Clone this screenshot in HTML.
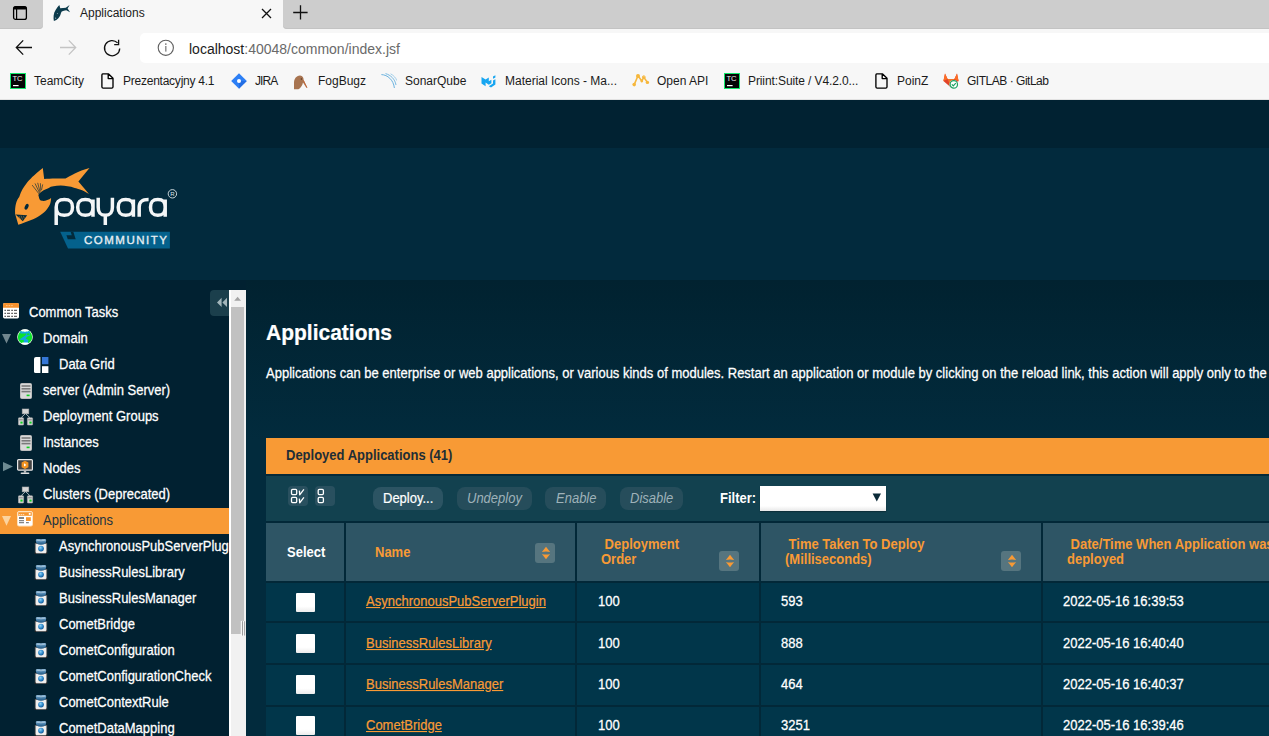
<!DOCTYPE html>
<html><head><meta charset="utf-8">
<style>
*{margin:0;padding:0;box-sizing:border-box}
html,body{width:1269px;height:736px;overflow:hidden;background:#f7f7f7;font-family:"Liberation Sans",sans-serif}
.a{position:absolute}
.t{position:absolute;white-space:nowrap;line-height:1}
/* chrome */
#tabl{left:0;top:0;width:43px;height:29px;background:#cdcdcd;border-bottom-right-radius:4px;box-shadow:inset 0 -1px 0 #c3c3c3}
#tabr{left:283px;top:0;width:986px;height:29px;background:#cdcdcd;border-bottom-left-radius:4px;box-shadow:inset 0 -1px 0 #c3c3c3}
#addr{left:140px;top:33px;width:1140px;height:30px;background:#fff;border-radius:5px}
#bmline{left:0;top:99px;width:1269px;height:1px;background:#e2e2e2}
.bm{position:absolute;top:74px;font-size:12px;color:#1b1b1b;line-height:14px;white-space:nowrap}
/* page */
#top{left:0;top:100px;width:1269px;height:48px;background:#012232}
#logo{left:0;top:148px;width:1269px;height:132px;background:#022a3d}
#side{left:0;top:280px;width:229px;height:456px;background:#012131}
#gap{left:229px;top:280px;width:37px;height:456px;background:#012131}
#content{left:246px;top:280px;width:1023px;height:456px;background:linear-gradient(#012230,#022b3d 160px,#022b3d)}
.si{position:absolute;font-size:13px;color:#fff;line-height:26px;white-space:nowrap;-webkit-text-stroke-width:0.25px;transform:scaleY(1.1);transform-origin:0 9.5px}
.sy{transform:scaleY(1.1);transform-origin:0 3px}
</style></head><body>
<!-- tab strip -->
<div class="a" id="tabl"></div>
<div class="a" id="tabr"></div>
<div class="t" style="left:80px;top:6px;font-size:12px;color:#1b1b1b;line-height:14px">Applications</div>
<div class="a" id="addr"></div>
<div class="t" style="left:189px;top:41px;font-size:14px;color:#1b1b1b;line-height:16px">localhost<span style="color:#6a6a6a">:40048/common/index.jsf</span></div>
<div class="a" id="bmline"></div>
<div class="bm" style="left:34px">TeamCity</div>
<div class="bm" style="left:123px;letter-spacing:-0.24px">Prezentacyjny 4.1</div>
<div class="bm" style="left:255px;letter-spacing:-0.9px">JIRA</div>
<div class="bm" style="left:318px">FogBugz</div>
<div class="bm" style="left:405px">SonarQube</div>
<div class="bm" style="left:505px">Material Icons - Ma...</div>
<div class="bm" style="left:657px">Open API</div>
<div class="bm" style="left:748px;letter-spacing:-0.1px">Priint:Suite / V4.2.0...</div>
<div class="bm" style="left:897px">PoinZ</div>
<div class="bm" style="left:967px;letter-spacing:-0.48px">GITLAB · GitLab</div>


<!-- chrome icons -->
<svg class="a" style="left:12px;top:5px" width="16" height="16" viewBox="0 0 16 16"><rect x="1.6" y="1.6" width="12.8" height="12.8" rx="2" fill="none" stroke="#000" stroke-width="1.3"/><rect x="1.6" y="1.6" width="12.8" height="3" rx="1" fill="#000"/><line x1="4.6" y1="4" x2="4.6" y2="14.4" stroke="#000" stroke-width="1.2"/></svg>
<svg class="a" style="left:53px;top:4px" width="18" height="18" viewBox="0 0 18 18"><path d="M0.9 17 C0.2 14 0.4 9 2.6 6 C3.8 4.2 5 2.4 6.3 1 L7.3 4.3 C9 3.9 11 3.9 12.8 3.7 L16.6 1 L14.6 4.4 L17.1 8.2 L13.2 6.2 C11.5 6.4 10 6.8 8.8 7.5 C8 8.5 7.8 9.8 7.4 11 C6.4 13.6 4.6 15.8 0.9 17Z" fill="#0b3a4b"/><circle cx="2.6" cy="14.2" r=".6" fill="#9ab"/><circle cx="4.4" cy="9.6" r=".5" fill="#9ab"/></svg>
<svg class="a" style="left:261px;top:8px" width="11" height="11" viewBox="0 0 11 11"><path d="M1 1L10 10M10 1L1 10" stroke="#111" stroke-width="1.3"/></svg>
<svg class="a" style="left:292px;top:4px" width="17" height="17" viewBox="0 0 17 17"><path d="M8.5 1.2V15.6M1.2 8.5H15.6" stroke="#111" stroke-width="1.3"/></svg>
<svg class="a" style="left:15px;top:39px" width="18" height="17" viewBox="0 0 18 17"><path d="M17 8.5H1.6M8.2 1.4L1.3 8.5L8.2 15.6" fill="none" stroke="#111" stroke-width="1.3"/></svg>
<svg class="a" style="left:59px;top:39px" width="18" height="17" viewBox="0 0 18 17"><path d="M1 8.5H16.4M9.8 1.4L16.7 8.5L9.8 15.6" fill="none" stroke="#c4c4c4" stroke-width="1.3"/></svg>
<svg class="a" style="left:100px;top:36px" width="24" height="24" viewBox="0 0 24 24"><path d="M19.7 12.4A7.6 7.6 0 1 1 17.6 6.9" fill="none" stroke="#111" stroke-width="1.3"/><path d="M18.6 3.8V8.6H14.2" fill="none" stroke="#111" stroke-width="1.3"/></svg>
<svg class="a" style="left:157px;top:39px" width="18" height="18" viewBox="0 0 18 18"><circle cx="8.8" cy="8.8" r="7.6" fill="none" stroke="#5f5f5f" stroke-width="1.1"/><rect x="8.1" y="4.4" width="1.4" height="1.4" fill="#666"/><rect x="8.1" y="7" width="1.4" height="5.6" fill="#888"/></svg>

<svg class="a" style="left:10px;top:73px" width="16" height="16" viewBox="0 0 16 16"><rect x="0.5" y="0.5" width="15" height="15" fill="#050505" stroke="#12e86a" stroke-width="1"/><text x="2.4" y="8.4" font-family="Liberation Sans" font-size="7.6" fill="#f0f0f0">TC</text><rect x="3" y="12" width="5.6" height="1.2" fill="#fff"/></svg><svg class="a" style="left:101px;top:73px" width="13" height="16" viewBox="0 0 13 16"><path d="M1.8 0.9H7.6L12 5.3V14A1.2 1.2 0 0 1 10.8 15.1H2.1A1.2 1.2 0 0 1 0.9 14V2A1.2 1.2 0 0 1 1.8 0.9Z M7.2 1V5.6H11.9" fill="none" stroke="#000" stroke-width="1.35" stroke-linejoin="round"/></svg><svg class="a" style="left:724px;top:73px" width="16" height="16" viewBox="0 0 16 16"><rect x="0.5" y="0.5" width="15" height="15" fill="#050505" stroke="#12e86a" stroke-width="1"/><text x="2.4" y="8.4" font-family="Liberation Sans" font-size="7.6" fill="#f0f0f0">TC</text><rect x="3" y="12" width="5.6" height="1.2" fill="#fff"/></svg><svg class="a" style="left:875px;top:73px" width="13" height="16" viewBox="0 0 13 16"><path d="M1.8 0.9H7.6L12 5.3V14A1.2 1.2 0 0 1 10.8 15.1H2.1A1.2 1.2 0 0 1 0.9 14V2A1.2 1.2 0 0 1 1.8 0.9Z M7.2 1V5.6H11.9" fill="none" stroke="#000" stroke-width="1.35" stroke-linejoin="round"/></svg><svg class="a" style="left:231px;top:73px" width="16" height="16" viewBox="0 0 16 16"><path d="M8 0.2L15.8 8L8 15.8L0.2 8Z" fill="#2d7ff5"/><path d="M8 8L15.8 8L8 15.8Z" fill="#1c63d8" opacity=".6"/><circle cx="8" cy="8" r="2" fill="#fff"/></svg><svg class="a" style="left:293px;top:74px" width="16" height="16" viewBox="0 0 16 16"><path d="M1 15.2V8.6C1 5 3 1.6 7 1.4C9.6 1.3 10.6 3.6 10.6 5.8L14 13.8L13.5 14L10 8.4C9.4 11.4 7.6 14 5.4 15.2Z" fill="#a87450"/><circle cx="8.4" cy="5" r=".7" fill="#553322"/><path d="M10.4 6.6L14 13.6" stroke="#c5683a" stroke-width="1"/></svg><svg class="a" style="left:381px;top:73px" width="16" height="16" viewBox="0 0 16 16"><path d="M0.4 1.6C6.6 1.8 12.4 6.8 13.4 15" fill="none" stroke="#6ab2df" stroke-width="1"/><path d="M4.5 0.6C9.6 2 14 6 15 12" fill="none" stroke="#6ab2df" stroke-width=".9"/><path d="M9.6 0.8C12.8 2.6 15 5 15.8 7.6" fill="none" stroke="#8cc4e6" stroke-width=".8"/></svg><svg class="a" style="left:481px;top:74px" width="16" height="16" viewBox="0 0 16 16"><path d="M0.5 3L4.6 5.6L7.8 3.6L7.8 7.2L10.4 5.8V9.2L7.8 10.8L4.6 8.6L4.6 12.2L0.5 9.6Z" fill="#17a6f1"/><path d="M12 2.4L14.4 1.2V3.6L12 4.8Z" fill="#17a6f1"/><path d="M14.4 5.2V10.6L10 13.6L7.8 12.2L12 9.5V6.6Z" fill="#17a6f1"/></svg><svg class="a" style="left:632px;top:74px" width="18" height="13" viewBox="0 0 18 13"><path d="M2.2 10.6L6 1.8L9.8 7L11.8 3.2L15.4 8.4" fill="none" stroke="#f6b73c" stroke-width="1.6"/><circle cx="2.2" cy="10.6" r="1.8" fill="#f6b73c"/><circle cx="6" cy="2" r="2" fill="#f6b73c"/><circle cx="9.8" cy="7" r="1.4" fill="#f6b73c"/><circle cx="11.8" cy="3.2" r="1.4" fill="none" stroke="#f6b73c" stroke-width="1"/><circle cx="15.4" cy="8.4" r="1.7" fill="#f6b73c"/></svg><svg class="a" style="left:943px;top:73px" width="16" height="16" viewBox="0 0 16 16"><path d="M2 0.6L4.6 6H11.4L14 0.6L15.6 8L8 14.4L0.4 8Z" fill="#e24329"/><path d="M0.4 8L2 0.6L4.6 6Z M15.6 8L14 0.6L11.4 6Z" fill="#fc6d26"/><path d="M8 14.4L4.6 6H11.4Z" fill="#fca326" opacity=".5"/><circle cx="10.8" cy="11.4" r="4.4" fill="#fff"/><circle cx="10.8" cy="11.4" r="3.7" fill="#fff" stroke="#1aa260" stroke-width="1.2"/><path d="M8.8 11.4L10.3 12.8L12.8 10.2" fill="none" stroke="#1aa260" stroke-width="1.2"/></svg>
<!-- page -->
<div class="a" id="top"></div>
<div class="a" id="logo"></div>
<div class="a" id="side"></div>
<div class="a" id="gap"></div>
<div class="a" id="content"></div>


<!-- logo -->
<svg class="a" style="left:0;top:160px" width="190" height="95" viewBox="0 160 190 95">
<path d="M18.3 224.8 L15.1 213.8 C14.8 206 16.5 200 19.2 197.1 C21 191 24 186.5 26.6 183.3 C29.5 179.5 34 175 42.8 168 L44.2 179.1 C49 178.4 55 178.4 65.5 178.6 C70 176 78 171 89.5 168 L78.4 181.4 L89 193.9 C83 190 78 188.5 74.7 187.9 C70 186.5 65 185.6 60.8 185.6 C55 185.6 51 186.5 48.8 187.9 C44.5 189.5 42 191 40.5 192.5 C38.5 194 38 195 38.7 196.2 C39 199 40 200.5 42 200.8 C45 201.2 48.5 200 51.1 198 C51 202 50 205 48.8 206.4 C46.5 210 44.5 212 42.3 213.8 C39 216.5 36 218 33.1 219.3 C28 221.5 22 223.5 18.3 224.8Z" fill="#f89a35"/>
<path d="M15.6 214.4 L27.2 215.2 L22.8 221.2Z" fill="#02293b"/>
<path d="M19 216L21 220.5M21 215.6L22.6 219.6M23.4 215.8L24.3 218.4" stroke="#f89a35" stroke-width=".7" opacity=".6"/>
<ellipse cx="26.6" cy="206.8" rx="1.7" ry="3.1" transform="rotate(25 26.6 206.8)" fill="#02293b"/>
<path d="M38.8 193.6L32.4 185.4M39.4 192.6L35.2 183.8M40 191.8L37.8 183.2M40.8 190.8L40.4 183.6M41.6 189.6L42.6 184.8" stroke="#2a3a3a" stroke-width=".75" stroke-linecap="round"/>
<path d="M56.20 207.30 C56.20 201.61 58.48 199.40 64.35 199.40 C70.22 199.40 72.50 201.61 72.50 207.30 C72.50 212.99 70.22 215.20 64.35 215.20 C58.48 215.20 56.20 212.99 56.20 207.30Z M56.20 207.30V225 M77.70 207.30 C77.70 201.61 79.84 199.40 85.35 199.40 C90.86 199.40 93.00 201.61 93.00 207.30 C93.00 212.99 90.86 215.20 85.35 215.20 C79.84 215.20 77.70 212.99 77.70 207.30Z M93.00 199.40V216.8 M98.20 197.8V207.30C98.20 212.99 100.19 215.20 105.30 215.20C110.41 215.20 112.40 212.99 112.40 207.30V197.8 M105.30 215.20V225 M118.20 207.30 C118.20 201.61 120.33 199.40 125.80 199.40 C131.27 199.40 133.40 201.61 133.40 207.30 C133.40 212.99 131.27 215.20 125.80 215.20 C120.33 215.20 118.20 212.99 118.20 207.30Z M133.40 199.40V216.8 M139.20 216.8V207.30C139.20 201.40 142.20 199.40 148.6 199.40 M150.50 207.30 C150.50 201.61 152.56 199.40 157.85 199.40 C163.14 199.40 165.20 201.61 165.20 207.30 C165.20 212.99 163.14 215.20 157.85 215.20 C152.56 215.20 150.50 212.99 150.50 207.30Z M165.20 199.40V216.8" fill="none" stroke="#f4f6f7" stroke-width="3.5"/>
<circle cx="172.4" cy="193.8" r="4.2" fill="none" stroke="#dfe6ea" stroke-width=".9"/>
<text x="170.2" y="196.3" font-family="Liberation Sans" font-size="6" fill="#dfe6ea">R</text>
<path d="M60.2 231.8 H169.9 V248.4 H68 Z" fill="#04618c"/>
<path d="M70.6 231.8 H73.3 L75.7 239.2 H67.8 L66.4 235.3 H71.8 Z" fill="#022a3c"/>
</svg>
<div class="t" style="left:84px;top:235px;font-size:11.5px;color:#e6eef2;letter-spacing:1.5px;line-height:10px;-webkit-text-stroke-width:0.35px">COMMUNITY</div>

<!-- sidebar -->
<div class="a" style="left:0;top:508px;width:229px;height:26px;background:#f89a35"></div>
<div class="si" style="left:29px;top:299px">Common Tasks</div>
<div class="si" style="left:43px;top:325px">Domain</div>
<div class="si" style="left:59px;top:351px">Data Grid</div>
<div class="si" style="left:43px;top:377px">server (Admin Server)</div>
<div class="si" style="left:43px;top:403px">Deployment Groups</div>
<div class="si" style="left:43px;top:429px">Instances</div>
<div class="si" style="left:43px;top:455px">Nodes</div>
<div class="si" style="left:43px;top:481px">Clusters (Deprecated)</div>
<div class="si" style="left:43px;top:507px;color:#1d3440;-webkit-text-stroke-width:0">Applications</div>
<div style="position:absolute;left:0;top:0;width:229px;height:736px;overflow:hidden">
<div class="si" style="left:59px;top:533px">AsynchronousPubServerPlugin</div>
</div>
<div class="si" style="left:59px;top:559px">BusinessRulesLibrary</div>
<div class="si" style="left:59px;top:585px">BusinessRulesManager</div>
<div class="si" style="left:59px;top:611px">CometBridge</div>
<div class="si" style="left:59px;top:637px">CometConfiguration</div>
<div class="si" style="left:59px;top:663px">CometConfigurationCheck</div>
<div class="si" style="left:59px;top:689px">CometContextRule</div>
<div class="si" style="left:59px;top:715px">CometDataMapping</div>


<!-- sidebar icons -->
<svg width="0" height="0" style="position:absolute"><defs><linearGradient id="lidg" x1="0" y1="0" x2="0" y2="1"><stop offset="0" stop-color="#8fb6d4"/><stop offset=".45" stop-color="#4f86b0"/><stop offset="1" stop-color="#1b527e"/></linearGradient><radialGradient id="ballg" cx=".4" cy=".35" r=".7"><stop offset="0" stop-color="#8fd2f8"/><stop offset=".6" stop-color="#2b86c8"/><stop offset="1" stop-color="#0f4f8c"/></radialGradient></defs></svg>
<svg class="a" style="left:3px;top:303px" width="16" height="16" viewBox="0 0 16 16"><rect x="0" y="0" width="16" height="15.4" rx="1.6" fill="#fff"/><path d="M1.6 0H14.4A1.6 1.6 0 0 1 16 1.6V4.8H0V1.6A1.6 1.6 0 0 1 1.6 0Z" fill="#f7922e"/><path d="M3 2.6h1.6M5.6 2.6h1.6M8.2 2.6h1.6" stroke="#fcd0a0" stroke-width=".8"/><path d="M1.4 7.4h1.6M4 7.4h3M8.2 7.4h1.8M11 7.4h3M1.4 10.4h1.6M4 10.4h3M8.2 10.4h1.8M11 10.4h3M1.4 13.3h1.6M4 13.3h3M8.2 13.3h1.8M11 13.3h3" stroke="#666" stroke-width="1.2"/></svg><svg class="a" style="left:2px;top:334px" width="9" height="10" viewBox="0 0 9 10"><path d="M0 0H9L4.5 9.6Z" fill="#70868e"/></svg><svg class="a" style="left:17px;top:329px" width="16" height="16" viewBox="0 0 16 16"><circle cx="8" cy="8" r="7.8" fill="#f2fff2"/><circle cx="8" cy="8" r="7.2" fill="#0ce22c"/><path d="M3 2.2H12.8L13 6.6L10.4 7.6L8.6 9.4L11.4 11L11 14.4H6.6L6.8 10.8L4.8 11L2.6 10.6L5.4 8.4L8.4 6.4L9.6 4.4H3.4Z" fill="#12a6e4"/><ellipse cx="11.2" cy="5.2" rx="1.4" ry="1" fill="#0ce22c"/><path d="M4.2 1.2Q8 -0.6 11.8 1.2L11 2.4H8.8L8 3.2L7.2 2.4H4.8Z" fill="#fff"/><path d="M5.4 13.4H10.6L11.8 14.8Q8 16.8 4.2 14.8Z" fill="#fff"/></svg><svg class="a" style="left:34px;top:357px" width="15" height="16" viewBox="0 0 15 16"><path d="M2 0H6.4V16H1.6A1.6 1.6 0 0 1 0 14.4V2A2 2 0 0 1 2 0Z" fill="#fff"/><rect x="8" y="0" width="6.4" height="7.2" fill="#3577d6"/><rect x="8" y="9.2" width="6.4" height="6.8" fill="#fff"/></svg><svg class="a" style="left:20px;top:383px" width="12" height="16" viewBox="0 0 12 16"><rect x="0.5" y="0.5" width="11" height="15" rx="1" fill="#d9d9d9" stroke="#bdbdbd" stroke-width="1"/><rect x="1.5" y="2.2" width="9" height="1.6" fill="#7a7a7a"/><rect x="1.5" y="5" width="9" height="1.6" fill="#7a7a7a"/><rect x="1.5" y="7.8" width="9" height="1.6" fill="#7a7a7a"/><rect x="6.6" y="11.6" width="3" height="1.6" fill="#10d020"/></svg><svg class="a" style="left:17.5px;top:408px" width="16" height="18" viewBox="0 0 16 18"><path d="M7.5 5.5L2.8 10M7.5 5.5L12.2 10" stroke="#cfd6d8" stroke-width=".8" fill="none"/><rect x="4.2" y="1" width="6.6" height="4.8" fill="#d6d6d6" stroke="#aaa" stroke-width=".6"/><rect x="0.4" y="9.8" width="5.2" height="7.2" rx=".6" fill="#d6d6d6" stroke="#aaa" stroke-width=".6"/><rect x="9.4" y="9.8" width="5.2" height="7.2" rx=".6" fill="#d6d6d6" stroke="#aaa" stroke-width=".6"/><rect x="1.2" y="11.4" width="3.6" height=".9" fill="#777"/><rect x="10.2" y="11.4" width="3.6" height=".9" fill="#777"/><rect x="2.4" y="13.6" width="2.2" height="2" fill="#10d020"/><rect x="11.4" y="13.6" width="2.2" height="2" fill="#10d020"/></svg><svg class="a" style="left:20px;top:435px" width="12" height="16" viewBox="0 0 12 16"><rect x="0.5" y="0.5" width="11" height="15" rx="1" fill="#d9d9d9" stroke="#bdbdbd" stroke-width="1"/><rect x="1.5" y="2.2" width="9" height="1.6" fill="#7a7a7a"/><rect x="1.5" y="5" width="9" height="1.6" fill="#7a7a7a"/><rect x="1.5" y="7.8" width="9" height="1.6" fill="#7a7a7a"/><rect x="6.6" y="11.6" width="3" height="1.6" fill="#10d020"/></svg><svg class="a" style="left:3px;top:462px" width="10" height="10" viewBox="0 0 10 10"><path d="M0 0L10 4.6L0 9.2Z" fill="#6d8a92"/></svg><svg class="a" style="left:17px;top:459px" width="16" height="16" viewBox="0 0 16 16"><rect x="0.6" y="0.6" width="14.8" height="10.6" rx="1" fill="#444" stroke="#e6e6e6" stroke-width="1.2"/><path d="M8 1.8L11.4 3.6V8.2L8 10L4.6 8.2V3.6Z" fill="#f39321"/><path d="M7 4.2L9.4 5.9L7 7.6Z" fill="#fff"/><rect x="6.8" y="11.4" width="2.4" height="2.2" fill="#bbb"/><rect x="3.6" y="13.4" width="8.8" height="1.6" rx=".8" fill="#e0e0e0"/></svg><svg class="a" style="left:17.5px;top:486px" width="16" height="18" viewBox="0 0 16 18"><path d="M7.5 5.5L2.8 10M7.5 5.5L12.2 10" stroke="#cfd6d8" stroke-width=".8" fill="none"/><rect x="4.2" y="1" width="6.6" height="4.8" fill="#d6d6d6" stroke="#aaa" stroke-width=".6"/><rect x="0.4" y="9.8" width="5.2" height="7.2" rx=".6" fill="#d6d6d6" stroke="#aaa" stroke-width=".6"/><rect x="9.4" y="9.8" width="5.2" height="7.2" rx=".6" fill="#d6d6d6" stroke="#aaa" stroke-width=".6"/><rect x="1.2" y="11.4" width="3.6" height=".9" fill="#777"/><rect x="10.2" y="11.4" width="3.6" height=".9" fill="#777"/><rect x="2.4" y="13.6" width="2.2" height="2" fill="#10d020"/><rect x="11.4" y="13.6" width="2.2" height="2" fill="#10d020"/></svg><svg class="a" style="left:2px;top:516px" width="9" height="10" viewBox="0 0 9 10"><path d="M0 0H9L4.5 9.8Z" fill="#fcd39e"/></svg><svg class="a" style="left:17px;top:511px" width="16" height="16" viewBox="0 0 16 16"><rect x="0.5" y="0.5" width="15" height="14.5" rx="1.6" fill="#fff" stroke="#fde2bf" stroke-width="1"/><rect x="1.2" y="1.2" width="13.6" height="3.6" fill="#f7962f"/><path d="M1.8 3.6h1.4M3.8 3.6h1.4M5.8 3.6h1.4" stroke="#fff" stroke-width=".7"/><rect x="11.8" y="2" width="1.8" height="1.8" fill="#fff"/><rect x="2" y="6.2" width="5" height="1.6" fill="#666"/><rect x="2" y="9.2" width="5" height="1" fill="#666"/><rect x="2" y="11.2" width="5" height="1" fill="#666"/><rect x="9" y="6.2" width="4.8" height="3.8" fill="#f7962f"/><rect x="9" y="11.2" width="2.8" height="1" fill="#666"/></svg><svg class="a" style="left:34px;top:538px" width="14" height="16" viewBox="0 0 14 16"><rect x="1.2" y="5.4" width="11.6" height="10" fill="#e6e4e2" stroke="#5e5a58" stroke-width=".7"/><rect x="2.2" y="6.2" width="9.6" height="8.4" fill="#f2f0ee"/><circle cx="7" cy="10.6" r="2.9" fill="url(#ballg)"/><path d="M1.8 2.6C1.8 0.6 4 0.8 7 1.2C10 0.8 12.2 0.6 12.2 2.6C12.2 5.6 10.4 6.8 7 6.8C3.6 6.8 1.8 5.6 1.8 2.6Z" fill="url(#lidg)"/><path d="M2.6 2.2Q7 3.4 11.4 2.2" stroke="#c8dcea" stroke-width=".6" fill="none"/><circle cx="1.4" cy="15.2" r=".8" fill="#222"/><circle cx="12.6" cy="15.2" r=".8" fill="#222"/></svg><svg class="a" style="left:34px;top:564px" width="14" height="16" viewBox="0 0 14 16"><rect x="1.2" y="5.4" width="11.6" height="10" fill="#e6e4e2" stroke="#5e5a58" stroke-width=".7"/><rect x="2.2" y="6.2" width="9.6" height="8.4" fill="#f2f0ee"/><circle cx="7" cy="10.6" r="2.9" fill="url(#ballg)"/><path d="M1.8 2.6C1.8 0.6 4 0.8 7 1.2C10 0.8 12.2 0.6 12.2 2.6C12.2 5.6 10.4 6.8 7 6.8C3.6 6.8 1.8 5.6 1.8 2.6Z" fill="url(#lidg)"/><path d="M2.6 2.2Q7 3.4 11.4 2.2" stroke="#c8dcea" stroke-width=".6" fill="none"/><circle cx="1.4" cy="15.2" r=".8" fill="#222"/><circle cx="12.6" cy="15.2" r=".8" fill="#222"/></svg><svg class="a" style="left:34px;top:590px" width="14" height="16" viewBox="0 0 14 16"><rect x="1.2" y="5.4" width="11.6" height="10" fill="#e6e4e2" stroke="#5e5a58" stroke-width=".7"/><rect x="2.2" y="6.2" width="9.6" height="8.4" fill="#f2f0ee"/><circle cx="7" cy="10.6" r="2.9" fill="url(#ballg)"/><path d="M1.8 2.6C1.8 0.6 4 0.8 7 1.2C10 0.8 12.2 0.6 12.2 2.6C12.2 5.6 10.4 6.8 7 6.8C3.6 6.8 1.8 5.6 1.8 2.6Z" fill="url(#lidg)"/><path d="M2.6 2.2Q7 3.4 11.4 2.2" stroke="#c8dcea" stroke-width=".6" fill="none"/><circle cx="1.4" cy="15.2" r=".8" fill="#222"/><circle cx="12.6" cy="15.2" r=".8" fill="#222"/></svg><svg class="a" style="left:34px;top:616px" width="14" height="16" viewBox="0 0 14 16"><rect x="1.2" y="5.4" width="11.6" height="10" fill="#e6e4e2" stroke="#5e5a58" stroke-width=".7"/><rect x="2.2" y="6.2" width="9.6" height="8.4" fill="#f2f0ee"/><circle cx="7" cy="10.6" r="2.9" fill="url(#ballg)"/><path d="M1.8 2.6C1.8 0.6 4 0.8 7 1.2C10 0.8 12.2 0.6 12.2 2.6C12.2 5.6 10.4 6.8 7 6.8C3.6 6.8 1.8 5.6 1.8 2.6Z" fill="url(#lidg)"/><path d="M2.6 2.2Q7 3.4 11.4 2.2" stroke="#c8dcea" stroke-width=".6" fill="none"/><circle cx="1.4" cy="15.2" r=".8" fill="#222"/><circle cx="12.6" cy="15.2" r=".8" fill="#222"/></svg><svg class="a" style="left:34px;top:642px" width="14" height="16" viewBox="0 0 14 16"><rect x="1.2" y="5.4" width="11.6" height="10" fill="#e6e4e2" stroke="#5e5a58" stroke-width=".7"/><rect x="2.2" y="6.2" width="9.6" height="8.4" fill="#f2f0ee"/><circle cx="7" cy="10.6" r="2.9" fill="url(#ballg)"/><path d="M1.8 2.6C1.8 0.6 4 0.8 7 1.2C10 0.8 12.2 0.6 12.2 2.6C12.2 5.6 10.4 6.8 7 6.8C3.6 6.8 1.8 5.6 1.8 2.6Z" fill="url(#lidg)"/><path d="M2.6 2.2Q7 3.4 11.4 2.2" stroke="#c8dcea" stroke-width=".6" fill="none"/><circle cx="1.4" cy="15.2" r=".8" fill="#222"/><circle cx="12.6" cy="15.2" r=".8" fill="#222"/></svg><svg class="a" style="left:34px;top:668px" width="14" height="16" viewBox="0 0 14 16"><rect x="1.2" y="5.4" width="11.6" height="10" fill="#e6e4e2" stroke="#5e5a58" stroke-width=".7"/><rect x="2.2" y="6.2" width="9.6" height="8.4" fill="#f2f0ee"/><circle cx="7" cy="10.6" r="2.9" fill="url(#ballg)"/><path d="M1.8 2.6C1.8 0.6 4 0.8 7 1.2C10 0.8 12.2 0.6 12.2 2.6C12.2 5.6 10.4 6.8 7 6.8C3.6 6.8 1.8 5.6 1.8 2.6Z" fill="url(#lidg)"/><path d="M2.6 2.2Q7 3.4 11.4 2.2" stroke="#c8dcea" stroke-width=".6" fill="none"/><circle cx="1.4" cy="15.2" r=".8" fill="#222"/><circle cx="12.6" cy="15.2" r=".8" fill="#222"/></svg><svg class="a" style="left:34px;top:694px" width="14" height="16" viewBox="0 0 14 16"><rect x="1.2" y="5.4" width="11.6" height="10" fill="#e6e4e2" stroke="#5e5a58" stroke-width=".7"/><rect x="2.2" y="6.2" width="9.6" height="8.4" fill="#f2f0ee"/><circle cx="7" cy="10.6" r="2.9" fill="url(#ballg)"/><path d="M1.8 2.6C1.8 0.6 4 0.8 7 1.2C10 0.8 12.2 0.6 12.2 2.6C12.2 5.6 10.4 6.8 7 6.8C3.6 6.8 1.8 5.6 1.8 2.6Z" fill="url(#lidg)"/><path d="M2.6 2.2Q7 3.4 11.4 2.2" stroke="#c8dcea" stroke-width=".6" fill="none"/><circle cx="1.4" cy="15.2" r=".8" fill="#222"/><circle cx="12.6" cy="15.2" r=".8" fill="#222"/></svg><svg class="a" style="left:34px;top:720px" width="14" height="16" viewBox="0 0 14 16"><rect x="1.2" y="5.4" width="11.6" height="10" fill="#e6e4e2" stroke="#5e5a58" stroke-width=".7"/><rect x="2.2" y="6.2" width="9.6" height="8.4" fill="#f2f0ee"/><circle cx="7" cy="10.6" r="2.9" fill="url(#ballg)"/><path d="M1.8 2.6C1.8 0.6 4 0.8 7 1.2C10 0.8 12.2 0.6 12.2 2.6C12.2 5.6 10.4 6.8 7 6.8C3.6 6.8 1.8 5.6 1.8 2.6Z" fill="url(#lidg)"/><path d="M2.6 2.2Q7 3.4 11.4 2.2" stroke="#c8dcea" stroke-width=".6" fill="none"/><circle cx="1.4" cy="15.2" r=".8" fill="#222"/><circle cx="12.6" cy="15.2" r=".8" fill="#222"/></svg>
<!-- scrollbar -->
<div class="a" style="left:210px;top:290px;width:26px;height:26px;background:#1b3f4c;border-radius:4px"></div>
<div class="a" style="left:229px;top:290px;width:17px;height:446px;background:#f1f1f1;border-left:2px solid #fff"></div>
<div class="a" style="left:231px;top:307px;width:13px;height:327px;background:#c1c1c1"></div>


<svg class="a" style="left:216px;top:296px" width="14" height="12" viewBox="0 0 14 12"><path d="M5.6 1.8L1 6.4L5.6 11Z M11 1.8L6.4 6.4L11 11Z" fill="#a3b6bb"/></svg>
<svg class="a" style="left:233px;top:295px" width="10" height="8" viewBox="0 0 10 8"><path d="M1.2 5.8L4.6 1.8L8 5.8Z" fill="#a3a3a3"/></svg>

<!-- content -->
<div class="t" style="left:266px;top:320px;font-size:21px;font-weight:bold;color:#fff;line-height:24px;transform:scaleY(1.08);transform-origin:0 5px;-webkit-text-stroke-width:0.2px">Applications</div>
<div class="t sy" style="left:266px;top:365px;font-size:13px;color:#fff;-webkit-text-stroke-width:0.25px;line-height:15px">Applications can be enterprise or web applications, or various kinds of modules. Restart an application or module by clicking on the reload link, this action will apply only to the</div>
<div class="a" style="left:266px;top:438px;width:1003px;height:36px;background:#f89a35"></div>
<div class="t sy" style="left:286px;top:447px;font-size:13px;font-weight:bold;color:#1f2e35;line-height:15px">Deployed Applications (41)</div>
<div class="a" style="left:266px;top:474px;width:1003px;height:2px;background:#052a39"></div>
<div class="a" style="left:266px;top:476px;width:1003px;height:45px;background:#12414f"></div>
<div class="a" style="left:266px;top:521px;width:1003px;height:215px;background:#022838"></div>

<!-- toolbar -->
<div class="a" style="left:288px;top:486px;width:20px;height:20px;background:#29505f;border-radius:4px"></div>
<svg class="a" style="left:288px;top:486px" width="20" height="20" viewBox="0 0 20 20"><rect x="3.5" y="3.3" width="5.2" height="5.4" rx="1.1" fill="none" stroke="#fff" stroke-width="1.3"/><rect x="3.5" y="11.3" width="5.2" height="5.4" rx="1.1" fill="none" stroke="#fff" stroke-width="1.3"/><path d="M11.4 4.6L11.7 8.8L15.9 3.3M11.4 12.6L11.7 16.8L15.9 11.3" fill="none" stroke="#fff" stroke-width="1.3" stroke-linejoin="round"/></svg>
<div class="a" style="left:315px;top:486px;width:20px;height:20px;background:#29505f;border-radius:4px"></div>
<svg class="a" style="left:315px;top:486px" width="20" height="20" viewBox="0 0 20 20"><rect x="3.2" y="3.3" width="5.2" height="5.4" rx="1.1" fill="none" stroke="#fff" stroke-width="1.3"/><rect x="3.2" y="11.3" width="5.2" height="5.4" rx="1.1" fill="none" stroke="#fff" stroke-width="1.3"/></svg>
<div class="a" style="left:373px;top:487px;width:70px;height:23px;background:#2c5463;border-radius:8px"></div>
<div class="t sy" style="left:383px;top:490px;font-size:13px;color:#fff;-webkit-text-stroke-width:0.2px;line-height:15px">Deploy...</div>
<div class="a" style="left:457px;top:487px;width:75px;height:23px;background:#264d5b;border-radius:8px"></div>
<div class="t sy" style="left:467px;top:490px;font-size:13px;font-style:italic;color:#9fb2b9;line-height:15px">Undeploy</div>
<div class="a" style="left:545px;top:487px;width:61px;height:23px;background:#264d5b;border-radius:8px"></div>
<div class="t sy" style="left:556px;top:490px;font-size:13px;font-style:italic;color:#9fb2b9;line-height:15px">Enable</div>
<div class="a" style="left:620px;top:487px;width:63px;height:23px;background:#264d5b;border-radius:8px"></div>
<div class="t sy" style="left:630px;top:490px;font-size:13px;font-style:italic;color:#9fb2b9;line-height:15px">Disable</div>
<div class="t sy" style="left:720px;top:490px;font-size:13px;font-weight:bold;color:#fff;line-height:15px">Filter:</div>
<div class="a" style="left:760px;top:486px;width:126px;height:25px;background:linear-gradient(#fff 80%,#e8e8e8);box-shadow:0 1px 1px rgba(0,0,0,.25)"></div>
<svg class="a" style="left:872px;top:492px" width="10" height="10" viewBox="0 0 10 10"><path d="M0.6 1.6H9L4.8 9.6Z" fill="#0b2a38"/></svg>

<!-- table -->
<div class="a" style="left:266px;top:523px;width:78px;height:58px;background:#2e5565"></div>
<div class="a" style="left:346px;top:523px;width:229px;height:58px;background:#2e5565"></div>
<div class="a" style="left:577px;top:523px;width:182px;height:58px;background:#2e5565"></div>
<div class="a" style="left:761px;top:523px;width:280px;height:58px;background:#2e5565"></div>
<div class="a" style="left:1043px;top:523px;width:226px;height:58px;background:#2e5565"></div>
<div class="t sy" style="left:287px;top:544px;font-size:13px;font-weight:bold;color:#fff;line-height:15px">Select</div>
<div class="t sy" style="left:375px;top:544px;font-size:13px;font-weight:bold;color:#f89a35;line-height:15px">Name</div>
<div class="t sy" style="left:601px;top:537px;font-size:13px;font-weight:bold;color:#f89a35;line-height:14px;white-space:pre"> Deployment
Order</div>
<div class="t sy" style="left:785px;top:537px;font-size:13px;font-weight:bold;color:#f89a35;line-height:14px;white-space:pre"> Time Taken To Deploy
(Milliseconds)</div>
<div class="t sy" style="left:1067px;top:537px;font-size:13px;font-weight:bold;color:#f89a35;line-height:14px;white-space:pre"> Date/Time When Application was
deployed</div>
<svg class="a" style="left:535px;top:543px" width="20" height="20" viewBox="0 0 20 20"><rect width="20" height="20" rx="3" fill="#56757f"/><path d="M6.9 9L11 3.8L15.1 9Q11 7.8 6.9 9Z M6.9 10.9Q11 12.2 15.1 10.9L11 16.2Z" fill="#f89a35"/></svg><svg class="a" style="left:719px;top:551px" width="20" height="20" viewBox="0 0 20 20"><rect width="20" height="20" rx="3" fill="#56757f"/><path d="M6.9 9L11 3.8L15.1 9Q11 7.8 6.9 9Z M6.9 10.9Q11 12.2 15.1 10.9L11 16.2Z" fill="#f89a35"/></svg><svg class="a" style="left:1001px;top:551px" width="20" height="20" viewBox="0 0 20 20"><rect width="20" height="20" rx="3" fill="#56757f"/><path d="M6.9 9L11 3.8L15.1 9Q11 7.8 6.9 9Z M6.9 10.9Q11 12.2 15.1 10.9L11 16.2Z" fill="#f89a35"/></svg><div class="a" style="left:266px;top:583px;width:78px;height:38px;background:#01364a"></div>
<div class="a" style="left:346px;top:583px;width:229px;height:38px;background:#01364a"></div>
<div class="a" style="left:577px;top:583px;width:182px;height:38px;background:#01364a"></div>
<div class="a" style="left:761px;top:583px;width:280px;height:38px;background:#01364a"></div>
<div class="a" style="left:1043px;top:583px;width:226px;height:38px;background:#01364a"></div>
<div class="a" style="left:296px;top:593px;width:19px;height:19px;background:linear-gradient(#fff 70%,#ececec);border-radius:1px"></div>
<div class="t sy" style="left:366px;top:593px;font-size:13px;color:#f89a35;line-height:15px;text-decoration:underline;-webkit-text-stroke-width:0.2px">AsynchronousPubServerPlugin</div>
<div class="t sy" style="left:598px;top:593px;font-size:13px;color:#fff;line-height:15px;-webkit-text-stroke-width:0.25px">100</div>
<div class="t sy" style="left:781px;top:593px;font-size:13px;color:#fff;line-height:15px;-webkit-text-stroke-width:0.25px">593</div>
<div class="t sy" style="left:1063px;top:593px;font-size:13px;color:#fff;line-height:15px;-webkit-text-stroke-width:0.25px">2022-05-16 16:39:53</div>
<div class="a" style="left:266px;top:623px;width:78px;height:40px;background:#01364a"></div>
<div class="a" style="left:346px;top:623px;width:229px;height:40px;background:#01364a"></div>
<div class="a" style="left:577px;top:623px;width:182px;height:40px;background:#01364a"></div>
<div class="a" style="left:761px;top:623px;width:280px;height:40px;background:#01364a"></div>
<div class="a" style="left:1043px;top:623px;width:226px;height:40px;background:#01364a"></div>
<div class="a" style="left:296px;top:634px;width:19px;height:19px;background:linear-gradient(#fff 70%,#ececec);border-radius:1px"></div>
<div class="t sy" style="left:366px;top:635px;font-size:13px;color:#f89a35;line-height:15px;text-decoration:underline;-webkit-text-stroke-width:0.2px">BusinessRulesLibrary</div>
<div class="t sy" style="left:598px;top:635px;font-size:13px;color:#fff;line-height:15px;-webkit-text-stroke-width:0.25px">100</div>
<div class="t sy" style="left:781px;top:635px;font-size:13px;color:#fff;line-height:15px;-webkit-text-stroke-width:0.25px">888</div>
<div class="t sy" style="left:1063px;top:635px;font-size:13px;color:#fff;line-height:15px;-webkit-text-stroke-width:0.25px">2022-05-16 16:40:40</div>
<div class="a" style="left:266px;top:665px;width:78px;height:40px;background:#01364a"></div>
<div class="a" style="left:346px;top:665px;width:229px;height:40px;background:#01364a"></div>
<div class="a" style="left:577px;top:665px;width:182px;height:40px;background:#01364a"></div>
<div class="a" style="left:761px;top:665px;width:280px;height:40px;background:#01364a"></div>
<div class="a" style="left:1043px;top:665px;width:226px;height:40px;background:#01364a"></div>
<div class="a" style="left:296px;top:675px;width:19px;height:19px;background:linear-gradient(#fff 70%,#ececec);border-radius:1px"></div>
<div class="t sy" style="left:366px;top:676px;font-size:13px;color:#f89a35;line-height:15px;text-decoration:underline;-webkit-text-stroke-width:0.2px">BusinessRulesManager</div>
<div class="t sy" style="left:598px;top:676px;font-size:13px;color:#fff;line-height:15px;-webkit-text-stroke-width:0.25px">100</div>
<div class="t sy" style="left:781px;top:676px;font-size:13px;color:#fff;line-height:15px;-webkit-text-stroke-width:0.25px">464</div>
<div class="t sy" style="left:1063px;top:676px;font-size:13px;color:#fff;line-height:15px;-webkit-text-stroke-width:0.25px">2022-05-16 16:40:37</div>
<div class="a" style="left:266px;top:707px;width:78px;height:43px;background:#01364a"></div>
<div class="a" style="left:346px;top:707px;width:229px;height:43px;background:#01364a"></div>
<div class="a" style="left:577px;top:707px;width:182px;height:43px;background:#01364a"></div>
<div class="a" style="left:761px;top:707px;width:280px;height:43px;background:#01364a"></div>
<div class="a" style="left:1043px;top:707px;width:226px;height:43px;background:#01364a"></div>
<div class="a" style="left:296px;top:716px;width:19px;height:19px;background:linear-gradient(#fff 70%,#ececec);border-radius:1px"></div>
<div class="t sy" style="left:366px;top:717px;font-size:13px;color:#f89a35;line-height:15px;text-decoration:underline;-webkit-text-stroke-width:0.2px">CometBridge</div>
<div class="t sy" style="left:598px;top:717px;font-size:13px;color:#fff;line-height:15px;-webkit-text-stroke-width:0.25px">100</div>
<div class="t sy" style="left:781px;top:717px;font-size:13px;color:#fff;line-height:15px;-webkit-text-stroke-width:0.25px">3251</div>
<div class="t sy" style="left:1063px;top:717px;font-size:13px;color:#fff;line-height:15px;-webkit-text-stroke-width:0.25px">2022-05-16 16:39:46</div>

<svg class="a" style="left:240px;top:620px" width="6" height="17" viewBox="0 0 6 17"><rect x="0.8" y="0.9" width="4.3" height="15" fill="#fff"/><rect x="1.9" y="1.2" width="1.1" height="14.4" fill="#9c9c9c"/><rect x="3.9" y="1.2" width="1.2" height="14.4" fill="#a8a8a8"/></svg>
</body></html>
